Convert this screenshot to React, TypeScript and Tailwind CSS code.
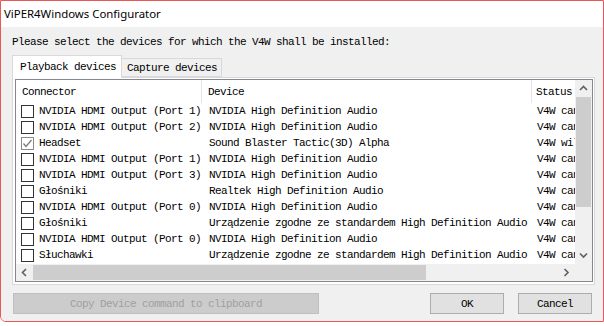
import React from "react";

const rows: { c: string; d: string; s: string; checked?: boolean }[] = [
  { c: "NVIDIA HDMI Output (Port 1)", d: "NVIDIA High Definition Audio", s: "V4W can be installed" },
  { c: "NVIDIA HDMI Output (Port 2)", d: "NVIDIA High Definition Audio", s: "V4W can be installed" },
  { c: "Headset", d: "Sound Blaster Tactic(3D) Alpha", s: "V4W will be kept", checked: true },
  { c: "NVIDIA HDMI Output (Port 1)", d: "NVIDIA High Definition Audio", s: "V4W can be installed" },
  { c: "NVIDIA HDMI Output (Port 3)", d: "NVIDIA High Definition Audio", s: "V4W can be installed" },
  { c: "Głośniki", d: "Realtek High Definition Audio", s: "V4W can be installed" },
  { c: "NVIDIA HDMI Output (Port 0)", d: "NVIDIA High Definition Audio", s: "V4W can be installed" },
  { c: "Głośniki", d: "Urządzenie zgodne ze standardem High Definition Audio", s: "V4W can be installed" },
  { c: "NVIDIA HDMI Output (Port 0)", d: "NVIDIA High Definition Audio", s: "V4W can be installed" },
  { c: "Słuchawki", d: "Urządzenie zgodne ze standardem High Definition Audio", s: "V4W can be installed" },
];

const Chevron = ({ dir }: { dir: "up" | "down" | "left" | "right" }) => {
  const pts: Record<string, string> = {
    up: "1,5 4.5,1.5 8,5",
    down: "1,1.5 4.5,5 8,1.5",
    left: "5,1 1.5,4.5 5,8",
    right: "1.5,1 5,4.5 1.5,8",
  };
  const vertical = dir === "up" || dir === "down";
  return (
    <svg width={vertical ? 9 : 7} height={vertical ? 7 : 9} viewBox={vertical ? "0 0 9 7" : "0 0 7 9"}>
      <polyline points={pts[dir]} fill="none" stroke="#606060" strokeWidth="1.6" />
    </svg>
  );
};

const Checkbox = ({ checked }: { checked?: boolean }) => (
  <div
    className={`w-[13px] h-[13px] shrink-0 bg-white border ${checked ? "border-[#8a8a8a]" : "border-[#333333]"} flex items-center justify-center`}
  >
    {checked && (
      <svg width="11" height="11" viewBox="0 0 11 11">
        <polyline points="1.5,5.5 4,8.5 9.5,2" fill="none" stroke="#7a7a7a" strokeWidth="1.3" />
      </svg>
    )}
  </div>
);

export default function App() {
  return (
    <div className="w-[604px] h-[326px] bg-white">
      <div className="w-[604px] h-[322px] border border-[#e95757] rounded-bl-[6px] flex flex-col overflow-hidden">
        {/* Title bar */}
        <div className="h-[26px] bg-white flex items-center pl-[3px] font-[family-name:'Noto_Sans',sans-serif] text-[11.4px] text-black shrink-0">
          ViPER4Windows Configurator
        </div>
        {/* Body */}
        <div className="flex-1 bg-[#f0f0f0] flex flex-col font-[family-name:'Liberation_Mono',monospace] text-[11px] leading-[16px] tracking-[-0.6px] text-black">
          <div className="pt-[7px] pl-[11px] h-[23px]">Please select the devices for which the V4W shall be installed:</div>
          {/* Tabs */}
          <div className="mt-[5px] ml-[11px] flex items-end h-[22px] relative z-10">
            <div className="h-[23px] w-[110px] bg-white border border-[#d9d9d9] border-b-0 -mb-px flex items-center pl-[7px] pb-[1px]">
              Playback devices
            </div>
            <div className="h-[19px] w-[100px] bg-[#f0f0f0] border border-[#d9d9d9] border-l-0 flex items-center pl-[5px] pt-[1px]">
              Capture devices
            </div>
          </div>
          {/* Tab panel */}
          <div className="ml-[11px] w-[583px] h-[208px] bg-white border border-[#d9d9d9] pt-[1px] pl-[2px] pr-[1px] pb-[2px]">
            <div className="w-[578px] h-[203px] border border-[#828790] flex flex-col">
              <div className="flex flex-1 min-h-0">
                {/* List content */}
                <div className="flex-1 flex flex-col min-w-0 overflow-hidden">
                  {/* Header */}
                  <div className="h-[23px] flex shrink-0 bg-white">
                    <div className="w-[186px] border-r border-[#e5e5e5] pl-[6px] flex items-center">Connector</div>
                    <div className="w-[330px] border-r border-[#e5e5e5] pl-[6px] flex items-center">Device</div>
                    <div className="flex-1 pl-[4px] flex items-center overflow-hidden whitespace-nowrap">Status</div>
                  </div>
                  {/* Rows */}
                  <div className="flex-1 overflow-hidden">
                    {rows.map((r, i) => (
                      <div key={i} className="h-[16px] flex items-center whitespace-nowrap">
                        <div className="w-[187px] flex items-center pl-[5px] gap-[5px] shrink-0">
                          <Checkbox checked={r.checked} />
                          <span>{r.c}</span>
                        </div>
                        <div className="w-[330px] pl-[6px] shrink-0 overflow-hidden">{r.d}</div>
                        <div className="flex-1 pl-[4px] overflow-hidden">{r.s}</div>
                      </div>
                    ))}
                  </div>
                </div>
                {/* Vertical scrollbar */}
                <div className="w-[17px] bg-[#f0f0f0] flex flex-col shrink-0">
                  <div className="h-[17px] flex items-center justify-center">
                    <Chevron dir="up" />
                  </div>
                  <div className="mx-[1px] h-[110px] bg-[#cdcdcd]" />
                  <div className="flex-1" />
                  <div className="h-[17px] flex items-center justify-center">
                    <Chevron dir="down" />
                  </div>
                </div>
              </div>
              {/* Horizontal scrollbar */}
              <div className="h-[17px] flex shrink-0">
                <div className="flex-1 bg-[#f0f0f0] flex items-center">
                  <div className="w-[17px] h-[17px] flex items-center justify-center">
                    <Chevron dir="left" />
                  </div>
                  <div className="w-[393px] h-[15px] bg-[#cdcdcd]" />
                  <div className="flex-1" />
                  <div className="w-[17px] h-[17px] flex items-center justify-center">
                    <Chevron dir="right" />
                  </div>
                </div>
                <div className="w-[17px] bg-[#f0f0f0]" />
              </div>
            </div>
          </div>
          {/* Buttons */}
          <div className="mt-[8px] flex items-center pl-[12px]">
            <div className="w-[306px] h-[21px] bg-[#cccccc] border border-[#bfbfbf] flex items-center justify-center text-[#a0a0a0]">
              Copy Device command to clipboard
            </div>
            <div className="ml-[111px] w-[74px] h-[21px] bg-[#e1e1e1] border border-[#adadad] flex items-center justify-center">
              OK
            </div>
            <div className="ml-[14px] w-[74px] h-[21px] bg-[#e1e1e1] border border-[#adadad] flex items-center justify-center">
              Cancel
            </div>
          </div>
        </div>
      </div>
    </div>
  );
}
